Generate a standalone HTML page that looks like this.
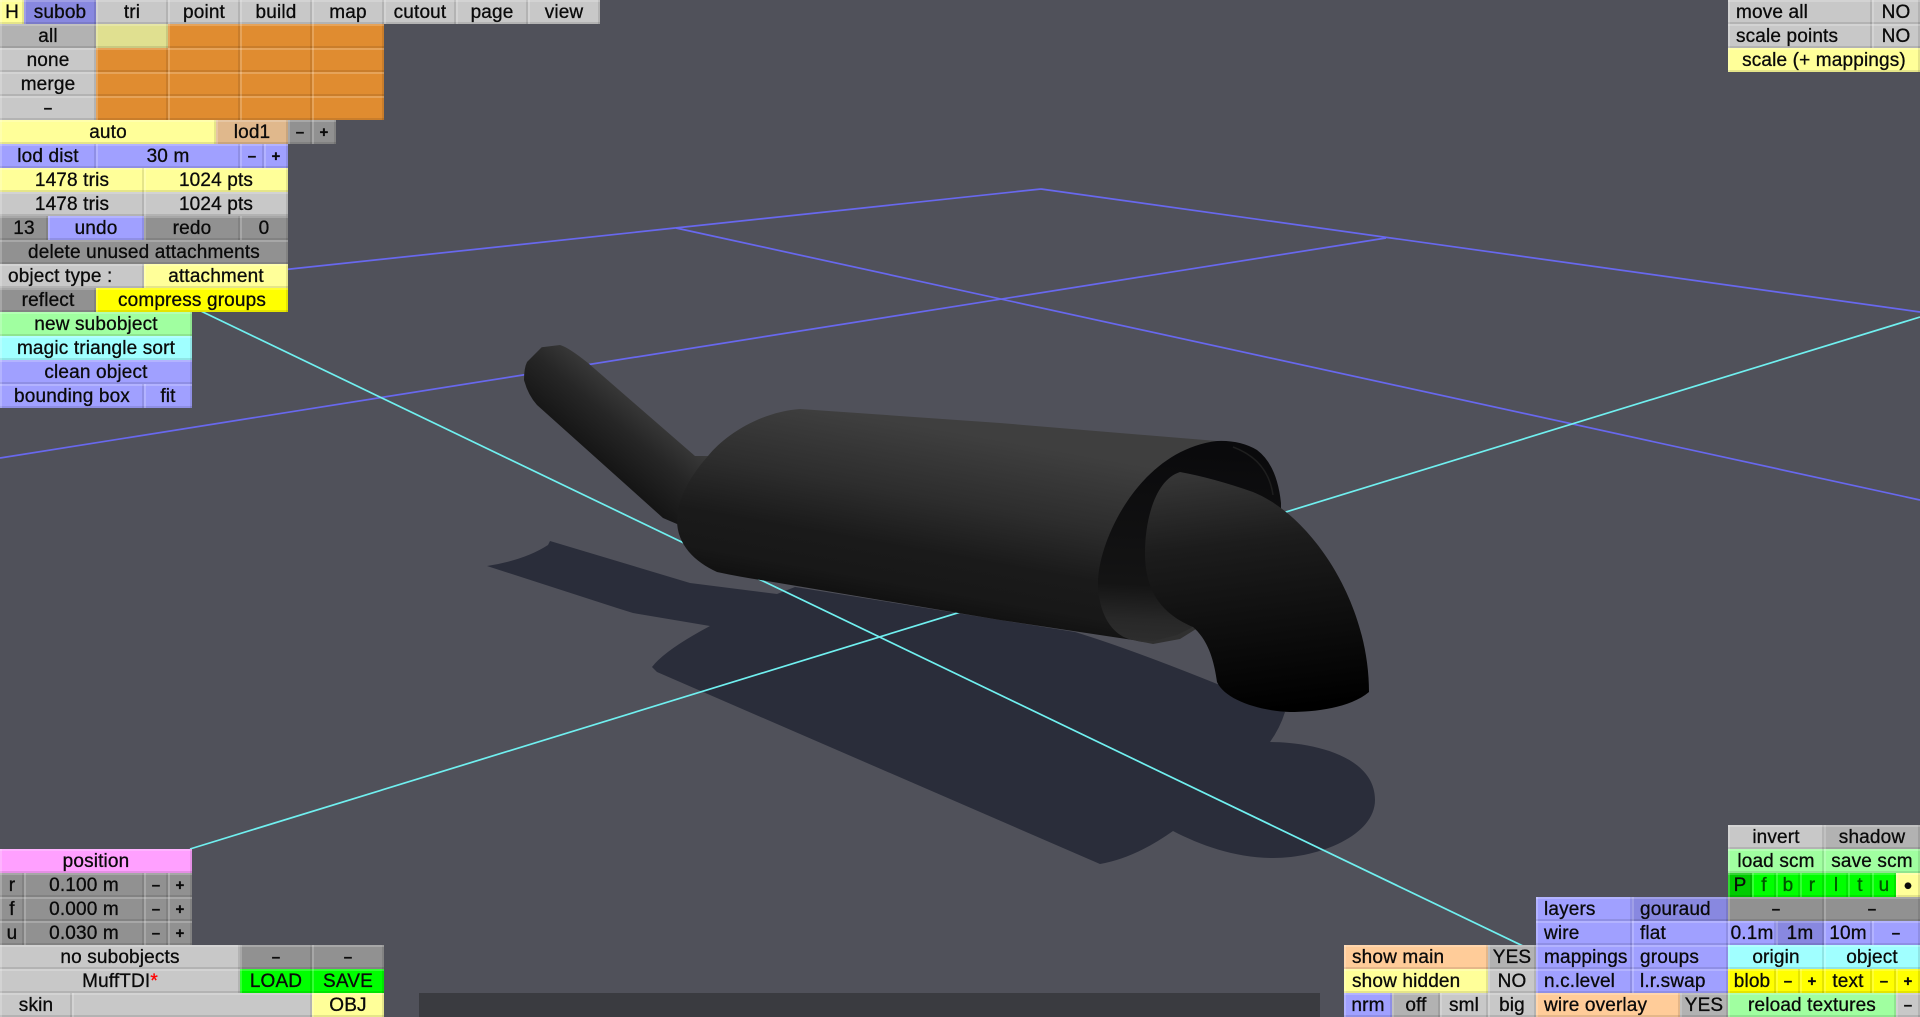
<!DOCTYPE html>
<html><head><meta charset="utf-8"><style>
html,body{margin:0;padding:0;width:1920px;height:1017px;overflow:hidden;background:#50515a}
#s{position:absolute;left:0;top:0}
.b{position:absolute;height:24px;text-align:center;font:19px/26px "Liberation Sans",sans-serif;letter-spacing:.15px;-webkit-text-stroke:.3px #0a0a0a;color:#0a0a0a;white-space:pre;box-sizing:border-box;overflow:hidden;
box-shadow:inset 0 2px 0 rgba(255,255,255,.2),inset 2px 0 0 rgba(255,255,255,.2),inset 0 -2px 0 rgba(0,0,0,.1),inset -2px 0 0 rgba(0,0,0,.1)}
.l{text-align:left;padding-left:8px}
.s{font-size:15px;font-weight:bold}
.g{background:#c8c8c8}.d{background:#919191}.m{background:#b2b2b2}
.y{background:#ffff99}.Y{background:#ffff00}.u{background:#a0a0ff}.U{background:#8888e0}
.o{background:#e08c30}.n{background:#a0ffa0}.c{background:#a0ffff}.p{background:#ffa0ff}
.G{background:#00ff00}.P{background:#00cc00}.k{background:#ffcc99}.t{background:#e0b88c}.e{background:#e0e090}
#bar{position:absolute;left:419px;top:993px;width:901px;height:24px;background:#3a3b40}
</style></head><body>
<svg id="s" width="1920" height="1017" viewBox="0 0 1920 1017" xmlns="http://www.w3.org/2000/svg">
<defs>
<linearGradient id="gp" gradientUnits="userSpaceOnUse" x1="625" y1="385" x2="575" y2="445"><stop offset="0" stop-color="#3c3c3c"/><stop offset=".45" stop-color="#262626"/><stop offset="1" stop-color="#141414"/></linearGradient>
<linearGradient id="gb" gradientUnits="userSpaceOnUse" x1="860" y1="415" x2="825" y2="610"><stop offset="0" stop-color="#3f3f3f"/><stop offset=".35" stop-color="#2d2d2d"/><stop offset=".62" stop-color="#1a1a1a"/><stop offset=".8" stop-color="#181818"/><stop offset="1" stop-color="#0b0b0b"/></linearGradient>
<linearGradient id="ge" gradientUnits="userSpaceOnUse" x1="1230" y1="470" x2="1260" y2="712"><stop offset="0" stop-color="#363636"/><stop offset=".3" stop-color="#1c1c1c"/><stop offset=".65" stop-color="#0e0e0e"/><stop offset="1" stop-color="#000"/></linearGradient>
<linearGradient id="gr" gradientUnits="userSpaceOnUse" x1="1180" y1="450" x2="1170" y2="645"><stop offset="0" stop-color="#0a0a0c"/><stop offset=".7" stop-color="#141414"/><stop offset=".88" stop-color="#282828"/><stop offset="1" stop-color="#2e2e2e"/></linearGradient>
</defs>
<path fill="#2a2d3a" d="M487,566 Q525,560 548,545 L550,541 L690,583 L777,594 L795,587 L1000,620 L1075,632 Q1150,655 1285,712 Q1280,728 1270,742 C1310,742 1375,755 1375,800 C1375,835 1320,858 1273,858 C1235,858 1200,845 1173,831 Q1135,858 1100,864 L657,672 L652,667 Q665,650 710,626 L633,613 L617,608 Z"/>
<g fill="none" stroke-width="1.7">
<g stroke="#6868ee">
<line x1="0" y1="300" x2="1041" y2="189"/>
<line x1="1041" y1="189" x2="1920" y2="312"/>
<line x1="676" y1="228" x2="1920" y2="500"/>
<line x1="0" y1="458" x2="1386" y2="238"/>
</g>
<g stroke="#70f0f0">
<line x1="180" y1="301" x2="1525" y2="947"/>
<line x1="1920" y1="317" x2="190" y2="849"/>
</g>
</g>
<path fill="url(#gp)" d="M541.7,347.3 L560,345 Q568,347 588,363 L695,456 L710,456 L700,530 L677,524 L663,518 L537,405 Q528,395 524,380 Q524,368 527,362 Z"/>
<path fill="url(#gb)" d="M1217,441 L1000,423 L800,409 C760,412 725,435 708,456 C690,476 677,500 677,520 C677,545 695,562 717,572 Q740,577 767,581 L1000,620 L1133,640 L1160,600 L1200,470 Z"/>
<path fill="url(#gr)" d="M1217,441 Q1240,440 1257,450 Q1277,465 1281,503 L1281,560 L1200,630 L1193,627 L1177,638 Q1155,646 1133,640 C1110,636 1098,610 1098,583 C1098,540 1140,450 1217,441 Z"/>
<path fill="none" stroke="#1e1e1e" stroke-width="1.5" d="M1233,447 Q1268,460 1273,495"/>
<path fill="#303030" d="M1133,640 L1153,641 L1177,635 L1193,627 L1196,629 L1180,639 L1153,644 Z"/>
<path fill="url(#ge)" d="M1180,472 Q1213,478 1253,492 C1310,515 1369,600 1369,692 C1350,708 1315,712 1290,712 C1260,711 1225,700 1217,682 C1214,660 1208,640 1193,627 C1165,615 1145,595 1145,553 C1145,520 1155,480 1180,472 Z"/>
</svg>
<div id="bar"></div>

<div class="b y" style="left:0;top:0;width:24px">H</div>
<div class="b U" style="left:24px;top:0;width:72px">subob</div>
<div class="b g" style="left:96px;top:0;width:72px">tri</div>
<div class="b g" style="left:168px;top:0;width:72px">point</div>
<div class="b g" style="left:240px;top:0;width:72px">build</div>
<div class="b g" style="left:312px;top:0;width:72px">map</div>
<div class="b g" style="left:384px;top:0;width:72px">cutout</div>
<div class="b g" style="left:456px;top:0;width:72px">page</div>
<div class="b g" style="left:528px;top:0;width:72px">view</div>

<div class="b m" style="left:0;top:24px;width:96px">all</div>
<div class="b e" style="left:96px;top:24px;width:72px"></div>
<div class="b o" style="left:168px;top:24px;width:72px"></div>
<div class="b o" style="left:240px;top:24px;width:72px"></div>
<div class="b o" style="left:312px;top:24px;width:72px"></div>
<div class="b g" style="left:0;top:48px;width:96px">none</div>
<div class="b o" style="left:96px;top:48px;width:72px"></div>
<div class="b o" style="left:168px;top:48px;width:72px"></div>
<div class="b o" style="left:240px;top:48px;width:72px"></div>
<div class="b o" style="left:312px;top:48px;width:72px"></div>
<div class="b g" style="left:0;top:72px;width:96px">merge</div>
<div class="b o" style="left:96px;top:72px;width:72px"></div>
<div class="b o" style="left:168px;top:72px;width:72px"></div>
<div class="b o" style="left:240px;top:72px;width:72px"></div>
<div class="b o" style="left:312px;top:72px;width:72px"></div>
<div class="b g s" style="left:0;top:96px;width:96px">–</div>
<div class="b o" style="left:96px;top:96px;width:72px"></div>
<div class="b o" style="left:168px;top:96px;width:72px"></div>
<div class="b o" style="left:240px;top:96px;width:72px"></div>
<div class="b o" style="left:312px;top:96px;width:72px"></div>

<div class="b y" style="left:0;top:120px;width:216px">auto</div>
<div class="b t" style="left:216px;top:120px;width:72px">lod1</div>
<div class="b d s" style="left:288px;top:120px;width:24px">–</div>
<div class="b d s" style="left:312px;top:120px;width:24px">+</div>

<div class="b u" style="left:0;top:144px;width:96px">lod dist</div>
<div class="b u" style="left:96px;top:144px;width:144px">30 m</div>
<div class="b u s" style="left:240px;top:144px;width:24px">–</div>
<div class="b u s" style="left:264px;top:144px;width:24px">+</div>

<div class="b y" style="left:0;top:168px;width:144px">1478 tris</div>
<div class="b y" style="left:144px;top:168px;width:144px">1024 pts</div>
<div class="b g" style="left:0;top:192px;width:144px">1478 tris</div>
<div class="b g" style="left:144px;top:192px;width:144px">1024 pts</div>

<div class="b d" style="left:0;top:216px;width:48px">13</div>
<div class="b u" style="left:48px;top:216px;width:96px">undo</div>
<div class="b d" style="left:144px;top:216px;width:96px">redo</div>
<div class="b d" style="left:240px;top:216px;width:48px">0</div>
<div class="b d" style="left:0;top:240px;width:288px">delete unused attachments</div>
<div class="b g l" style="left:0;top:264px;width:144px">object type :</div>
<div class="b y" style="left:144px;top:264px;width:144px">attachment</div>
<div class="b d" style="left:0;top:288px;width:96px">reflect</div>
<div class="b Y" style="left:96px;top:288px;width:192px">compress groups</div>
<div class="b n" style="left:0;top:312px;width:192px">new subobject</div>
<div class="b c" style="left:0;top:336px;width:192px">magic triangle sort</div>
<div class="b u" style="left:0;top:360px;width:192px">clean object</div>
<div class="b u" style="left:0;top:384px;width:144px">bounding box</div>
<div class="b u" style="left:144px;top:384px;width:48px">fit</div>

<div class="b p" style="left:0;top:849px;width:192px">position</div>
<div class="b d" style="left:0;top:873px;width:24px">r</div>
<div class="b d" style="left:24px;top:873px;width:120px">0.100 m</div>
<div class="b d s" style="left:144px;top:873px;width:24px">–</div>
<div class="b d s" style="left:168px;top:873px;width:24px">+</div>
<div class="b d" style="left:0;top:897px;width:24px">f</div>
<div class="b d" style="left:24px;top:897px;width:120px">0.000 m</div>
<div class="b d s" style="left:144px;top:897px;width:24px">–</div>
<div class="b d s" style="left:168px;top:897px;width:24px">+</div>
<div class="b d" style="left:0;top:921px;width:24px">u</div>
<div class="b d" style="left:24px;top:921px;width:120px">0.030 m</div>
<div class="b d s" style="left:144px;top:921px;width:24px">–</div>
<div class="b d s" style="left:168px;top:921px;width:24px">+</div>
<div class="b g" style="left:0;top:945px;width:240px">no subobjects</div>
<div class="b d s" style="left:240px;top:945px;width:72px">–</div>
<div class="b d s" style="left:312px;top:945px;width:72px">–</div>
<div class="b g" style="left:0;top:969px;width:240px">MuffTDI<span style="color:#f00;-webkit-text-stroke:.3px #f00">*</span></div>
<div class="b G" style="left:240px;top:969px;width:72px">LOAD</div>
<div class="b G" style="left:312px;top:969px;width:72px">SAVE</div>
<div class="b g" style="left:0;top:993px;width:72px">skin</div>
<div class="b g" style="left:72px;top:993px;width:240px"></div>
<div class="b y" style="left:312px;top:993px;width:72px">OBJ</div>

<div class="b g l" style="left:1728px;top:0;width:144px">move all</div>
<div class="b g" style="left:1872px;top:0;width:48px">NO</div>
<div class="b g l" style="left:1728px;top:24px;width:144px">scale points</div>
<div class="b g" style="left:1872px;top:24px;width:48px">NO</div>
<div class="b y" style="left:1728px;top:48px;width:192px">scale (+ mappings)</div>

<div class="b g" style="left:1728px;top:825px;width:96px">invert</div>
<div class="b m" style="left:1824px;top:825px;width:96px">shadow</div>
<div class="b n" style="left:1728px;top:849px;width:96px">load scm</div>
<div class="b n" style="left:1824px;top:849px;width:96px">save scm</div>
<div class="b P" style="left:1728px;top:873px;width:24px">P</div>
<div class="b G" style="left:1752px;top:873px;width:24px;color:#050;-webkit-text-stroke:.3px #050">f</div>
<div class="b G" style="left:1776px;top:873px;width:24px;color:#050;-webkit-text-stroke:.3px #050">b</div>
<div class="b G" style="left:1800px;top:873px;width:24px;color:#050;-webkit-text-stroke:.3px #050">r</div>
<div class="b G" style="left:1824px;top:873px;width:24px;color:#050;-webkit-text-stroke:.3px #050">l</div>
<div class="b G" style="left:1848px;top:873px;width:24px;color:#050;-webkit-text-stroke:.3px #050">t</div>
<div class="b G" style="left:1872px;top:873px;width:24px;color:#050;-webkit-text-stroke:.3px #050">u</div>
<div class="b y s" style="left:1896px;top:873px;width:24px">●</div>

<div class="b u l" style="left:1536px;top:897px;width:96px">layers</div>
<div class="b U l" style="left:1632px;top:897px;width:96px">gouraud</div>
<div class="b d s" style="left:1728px;top:897px;width:96px">–</div>
<div class="b d s" style="left:1824px;top:897px;width:96px">–</div>
<div class="b u l" style="left:1536px;top:921px;width:96px">wire</div>
<div class="b u l" style="left:1632px;top:921px;width:96px">flat</div>
<div class="b u" style="left:1728px;top:921px;width:48px">0.1m</div>
<div class="b U" style="left:1776px;top:921px;width:48px">1m</div>
<div class="b u" style="left:1824px;top:921px;width:48px">10m</div>
<div class="b u s" style="left:1872px;top:921px;width:48px">–</div>
<div class="b k l" style="left:1344px;top:945px;width:144px">show main</div>
<div class="b m" style="left:1488px;top:945px;width:48px">YES</div>
<div class="b u l" style="left:1536px;top:945px;width:96px">mappings</div>
<div class="b u l" style="left:1632px;top:945px;width:96px">groups</div>
<div class="b c" style="left:1728px;top:945px;width:96px">origin</div>
<div class="b c" style="left:1824px;top:945px;width:96px">object</div>
<div class="b y l" style="left:1344px;top:969px;width:144px">show hidden</div>
<div class="b g" style="left:1488px;top:969px;width:48px">NO</div>
<div class="b u l" style="left:1536px;top:969px;width:96px">n.c.level</div>
<div class="b u l" style="left:1632px;top:969px;width:96px">l.r.swap</div>
<div class="b Y" style="left:1728px;top:969px;width:48px">blob</div>
<div class="b Y s" style="left:1776px;top:969px;width:24px">–</div>
<div class="b Y s" style="left:1800px;top:969px;width:24px">+</div>
<div class="b Y" style="left:1824px;top:969px;width:48px">text</div>
<div class="b Y s" style="left:1872px;top:969px;width:24px">–</div>
<div class="b Y s" style="left:1896px;top:969px;width:24px">+</div>
<div class="b u" style="left:1344px;top:993px;width:48px">nrm</div>
<div class="b m" style="left:1392px;top:993px;width:48px">off</div>
<div class="b g" style="left:1440px;top:993px;width:48px">sml</div>
<div class="b g" style="left:1488px;top:993px;width:48px">big</div>
<div class="b k l" style="left:1536px;top:993px;width:144px">wire overlay</div>
<div class="b m" style="left:1680px;top:993px;width:48px">YES</div>
<div class="b n" style="left:1728px;top:993px;width:168px">reload textures</div>
<div class="b g s" style="left:1896px;top:993px;width:24px">–</div>
</body></html>
